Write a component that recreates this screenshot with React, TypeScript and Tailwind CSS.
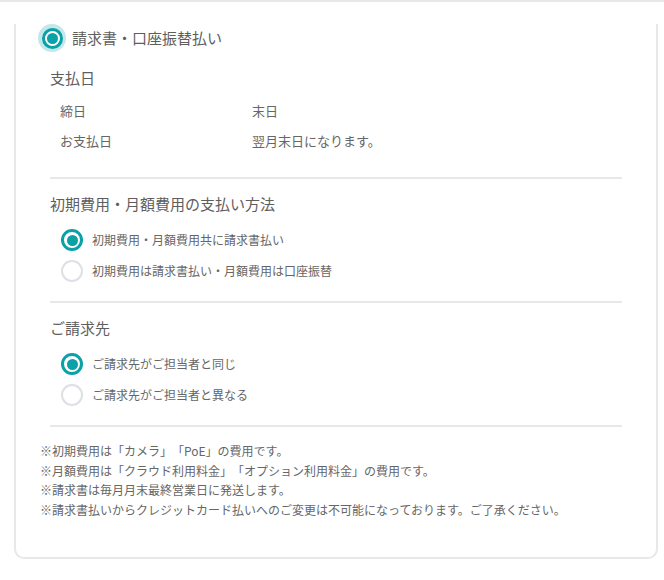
import React from "react";

const FONT = { fontFamily: '"Noto Sans CJK JP", "Noto Sans", sans-serif' };

function Radio({ checked }: { checked: boolean }) {
  if (checked) {
    return (
      <span className="flex h-[22px] w-[22px] shrink-0 items-center justify-center rounded-full border-[3px] border-[#0aa1a7] bg-white">
        <span className="h-[11px] w-[11px] rounded-full bg-[#0aa1a7]" />
      </span>
    );
  }
  return <span className="h-[22px] w-[22px] shrink-0 rounded-full border-2 border-[#dde0e4] bg-white" />;
}

function Option({ checked, label }: { checked: boolean; label: string }) {
  return (
    <div className="flex h-[22px] items-center gap-[9px] pl-[11px]">
      <Radio checked={checked} />
      <span className="text-[12px] leading-[22px] text-[#666]">{label}</span>
    </div>
  );
}

export default function App() {
  return (
    <div className="min-h-[580px] w-[664px] bg-white [text-spacing-trim:space-all]" style={FONT}>
      <div className="h-[2px] w-full bg-[#e8e8e8]" />
      <div className="ml-[14px] w-[644px] rounded-b-[10px] border-x-2 border-b-2 border-[#e8e8e8] pb-[38px]">
        <div className="ml-[22px] mt-[22px] flex h-[28px] items-center gap-[6px]">
          <span className="flex h-[28px] w-[28px] items-center justify-center rounded-full bg-[#c4e7e9]">
            <span className="flex h-[21px] w-[21px] items-center justify-center rounded-full border-[3px] border-[#0aa1a7] bg-white">
              <span className="h-[11px] w-[11px] rounded-full bg-[#0aa1a7]" />
            </span>
          </span>
          <span className="text-[15px] leading-[22px] text-[#5e5e5e]">請求書・口座振替払い</span>
        </div>

        <div className="px-[34px]">
          <div className="mt-[15px] text-[15px] leading-[22px] text-[#5e5e5e]">支払日</div>
          <div className="mt-[12px] flex flex-col gap-[10px] pl-[10px] text-[13px] leading-[20px] text-[#666]">
            <div className="flex">
              <span className="w-[192px]">締日</span>
              <span>末日</span>
            </div>
            <div className="flex">
              <span className="w-[192px]">お支払日</span>
              <span>翌月末日になります。</span>
            </div>
          </div>

          <div className="mt-[26px] h-[2px] bg-[#e8e8e8]" />

          <div className="mt-[14px] text-[15px] leading-[22px] text-[#5e5e5e]">初期費用・月額費用の支払い方法</div>
          <div className="mt-[14px] flex flex-col gap-[9px]">
            <Option checked label="初期費用・月額費用共に請求書払い" />
            <Option checked={false} label="初期費用は請求書払い・月額費用は口座振替" />
          </div>

          <div className="mt-[19px] h-[2px] bg-[#e8e8e8]" />

          <div className="mt-[14px] text-[15px] leading-[22px] text-[#5e5e5e]">ご請求先</div>
          <div className="mt-[14px] flex flex-col gap-[9px]">
            <Option checked label="ご請求先がご担当者と同じ" />
            <Option checked={false} label="ご請求先がご担当者と異なる" />
          </div>

          <div className="mt-[19px] h-[2px] bg-[#e8e8e8]" />
        </div>

        <div className="ml-[24px] mt-[14px] text-[12px] leading-[19.5px] text-[#666]">
          <div>※初期費用は「カメラ」「PoE」の費用です。</div>
          <div>※月額費用は「クラウド利用料金」「オプション利用料金」の費用です。</div>
          <div>※請求書は毎月月末最終営業日に発送します。</div>
          <div>※請求書払いからクレジットカード払いへのご変更は不可能になっております。ご了承ください。</div>
        </div>
      </div>
    </div>
  );
}
